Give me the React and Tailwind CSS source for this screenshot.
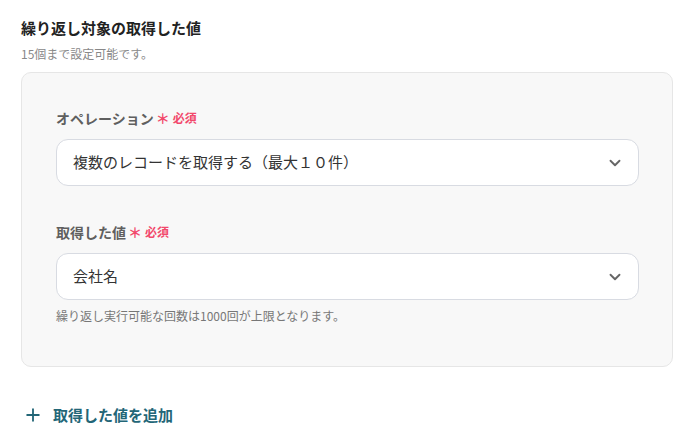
import { ChevronDown, Plus } from "lucide-react";

function Field({ label, value, note }) {
  return (
    <div>
      <div className="flex items-center h-5 text-[14px] font-bold text-[#5f5f5f]">
        {label}
        <span className="ml-[2px] text-[#f2486b] text-[14px] leading-none">＊</span>
        <span className="ml-[3px] text-[#f2486b] text-[12px]">必須</span>
      </div>
      <div className="mt-[11px] h-[47px] flex items-center justify-between bg-white border border-[#d8dbe2] rounded-[12px] pl-4 pr-[14px]">
        <span className="text-[15px] text-[#333]">{value}</span>
        <ChevronDown size={18} strokeWidth={2.5} className="text-[#666]" />
      </div>
      {note && <p className="mt-[7px] text-[12px] text-[#777]">{note}</p>}
    </div>
  );
}

export default function App() {
  return (
    <div
      className="w-[693px] h-[429px] bg-white pl-[21px] pr-[20px] pt-[16px]"
      style={{ fontFamily: '"Noto Sans CJK JP", "Noto Sans", sans-serif' }}
    >
      <h1 className="text-[15px] font-bold text-[#222] leading-6">繰り返し対象の取得した値</h1>
      <p className="mt-[6px] text-[12px] text-[#888] leading-4">15個まで設定可能です。</p>

      <div className="mt-[10px] h-[295px] bg-[#f8f8f8] border border-[#e6e6e6] rounded-[10px] pt-[35px] pl-[34px] pr-[33px]">
        <Field label="オペレーション" value="複数のレコードを取得する（最大１０件）" />
        <div className="h-[36px]" />
        <Field
          label="取得した値"
          value="会社名"
          note="繰り返し実行可能な回数は1000回が上限となります。"
        />
      </div>

      <div className="mt-[37px] flex items-center gap-[10px] text-[#236677] pl-[2px]">
        <Plus size={20} strokeWidth={2.2} />
        <span className="text-[15px] font-bold">取得した値を追加</span>
      </div>
    </div>
  );
}
